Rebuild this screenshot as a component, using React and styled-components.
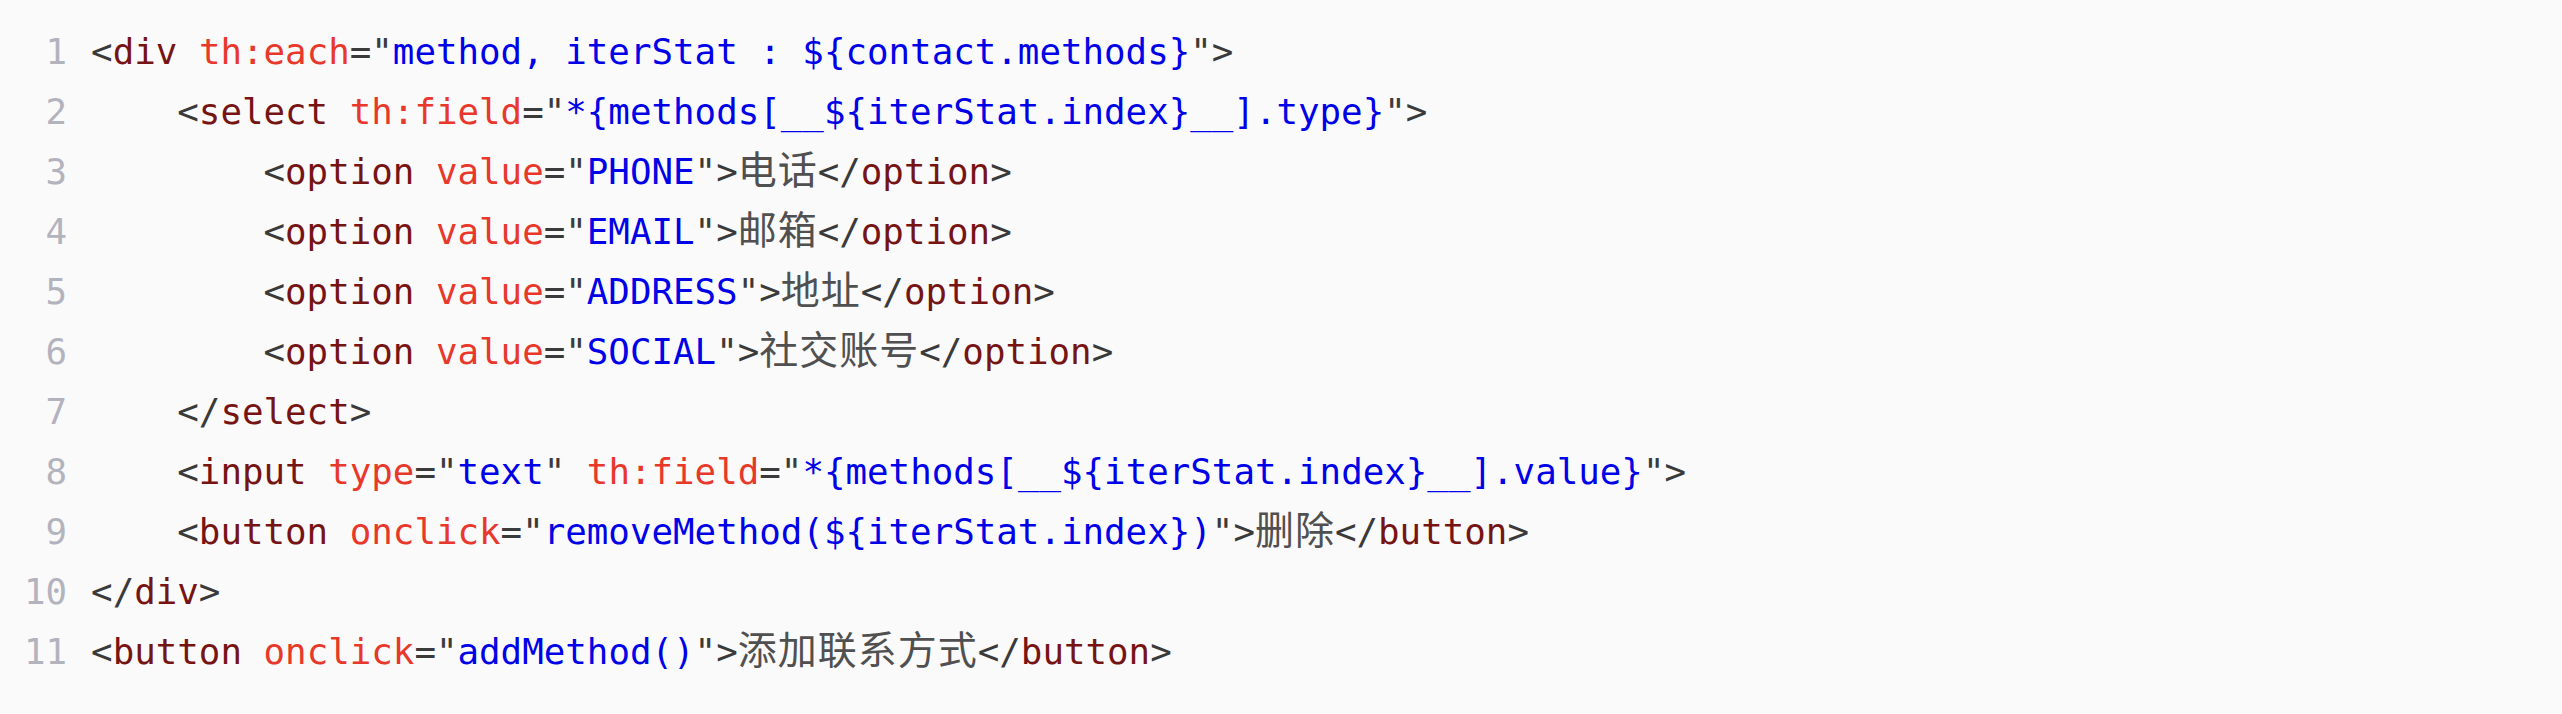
import styled, { createGlobalStyle } from "styled-components";

const GlobalStyle = createGlobalStyle`
  html, body {
    margin: 0;
    padding: 0;
    background-color: #fafafa;
  }
`;

const colors = {
  punct: "#3a3a3a",
  tag: "#761414",
  attr: "#e8382b",
  str: "#0000e8",
  text: "#505050",
};

const CodeBlock = styled.div`
  padding: 22px 24px 32px 24px;
  font-family: "DejaVu Sans Mono", monospace;
  font-size: 35.8px;
  line-height: 60px;
`;

const Line = styled.div`
  display: flex;
  align-items: baseline;
  height: 60px;
  white-space: pre;
`;

const LineNo = styled.span`
  width: 2ch;
  margin-right: 24px;
  text-align: right;
  color: #b3b3be;
  flex-shrink: 0;
`;

const Token = styled.span`
  color: ${(p) => colors[p.$kind]};
`;

const Han = styled.span`
  color: ${colors.text};
  font-family: "Noto Sans CJK SC", sans-serif;
  font-size: 39px;
  line-height: 1;
  letter-spacing: 1px;
`;

const P = "punct";
const T = "tag";
const A = "attr";
const S = "str";
const H = "han";

const lines = [
  [[P, "<"], [T, "div"], [P, " "], [A, "th:each"], [P, '="'], [S, "method, iterStat : ${contact.methods}"], [P, '">']],
  [[P, "    <"], [T, "select"], [P, " "], [A, "th:field"], [P, '="'], [S, "*{methods[__${iterStat.index}__].type}"], [P, '">']],
  [[P, "        <"], [T, "option"], [P, " "], [A, "value"], [P, '="'], [S, "PHONE"], [P, '">'], [H, "电话"], [P, "</"], [T, "option"], [P, ">"]],
  [[P, "        <"], [T, "option"], [P, " "], [A, "value"], [P, '="'], [S, "EMAIL"], [P, '">'], [H, "邮箱"], [P, "</"], [T, "option"], [P, ">"]],
  [[P, "        <"], [T, "option"], [P, " "], [A, "value"], [P, '="'], [S, "ADDRESS"], [P, '">'], [H, "地址"], [P, "</"], [T, "option"], [P, ">"]],
  [[P, "        <"], [T, "option"], [P, " "], [A, "value"], [P, '="'], [S, "SOCIAL"], [P, '">'], [H, "社交账号"], [P, "</"], [T, "option"], [P, ">"]],
  [[P, "    </"], [T, "select"], [P, ">"]],
  [[P, "    <"], [T, "input"], [P, " "], [A, "type"], [P, '="'], [S, "text"], [P, '" '], [A, "th:field"], [P, '="'], [S, "*{methods[__${iterStat.index}__].value}"], [P, '">']],
  [[P, "    <"], [T, "button"], [P, " "], [A, "onclick"], [P, '="'], [S, "removeMethod(${iterStat.index})"], [P, '">'], [H, "删除"], [P, "</"], [T, "button"], [P, ">"]],
  [[P, "</"], [T, "div"], [P, ">"]],
  [[P, "<"], [T, "button"], [P, " "], [A, "onclick"], [P, '="'], [S, "addMethod()"], [P, '">'], [H, "添加联系方式"], [P, "</"], [T, "button"], [P, ">"]],
];

export default function App() {
  return (
    <>
      <GlobalStyle />
      <CodeBlock>
        {lines.map((tokens, i) => (
          <Line key={i}>
            <LineNo>{i + 1}</LineNo>
            <span>
              {tokens.map(([kind, text], j) =>
                kind === H ? (
                  <Han key={j}>{text}</Han>
                ) : (
                  <Token key={j} $kind={kind}>
                    {text}
                  </Token>
                )
              )}
            </span>
          </Line>
        ))}
      </CodeBlock>
    </>
  );
}
